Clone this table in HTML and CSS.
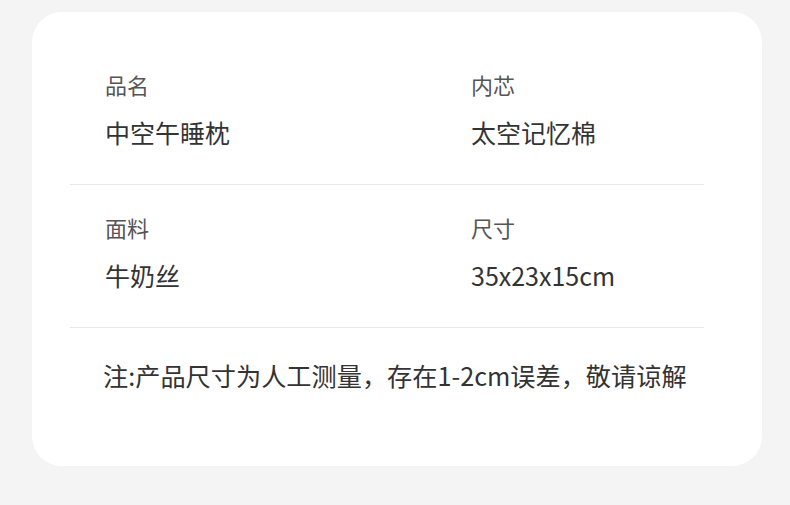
FILE: index.html
```html
<!DOCTYPE html>
<html lang="zh-CN">

<head>
    <meta charset="UTF-8">
    <meta name="viewport" content="width=device-width, initial-scale=1.0">
    <title>产品参数</title>
    <link rel="stylesheet" href="styles.css">
</head>

<body>
    <div class="card">
        <div class="row">
            <div class="item">
                <p class="label">品名</p>
                <p class="value">中空午睡枕</p>
            </div>
            <div class="item">
                <p class="label">内芯</p>
                <p class="value">太空记忆棉</p>
            </div>
        </div>
        <div class="row">
            <div class="item">
                <p class="label">面料</p>
                <p class="value">牛奶丝</p>
            </div>
            <div class="item">
                <p class="label">尺寸</p>
                <p class="value">35x23x15cm</p>
            </div>
        </div>
        <p class="note">注:产品尺寸为人工测量，存在1-2cm误差，敬请谅解</p>
    </div>
</body>

</html>
```

FILE: styles.css
```css
body {
    margin: 0;
    background-color: #f4f4f4;
    font-family: "Noto Sans CJK SC", "Noto Sans", sans-serif;
}

.card {
    width: 730px;
    height: 454px;
    box-sizing: border-box;
    margin: 12px 0 0 32px;
    padding: 30px 58px 0 38px;
    background: white;
    border-radius: 30px;
}

.row {
    display: grid;
    grid-template-columns: 366px 1fr;
    padding: 30px 0 37px 35px;
    border-bottom: 1px solid #e6e6e6;
}

.label {
    margin: 0;
    font-size: 22px;
    line-height: 24px;
    color: #555;
}

.value {
    margin: 21px 0 0;
    font-size: 25px;
    line-height: 30px;
    color: #333;
}

.note {
    margin: 32px 0 0 33px;
    font-size: 25.2px;
    line-height: 30px;
    color: #333;
}
```
